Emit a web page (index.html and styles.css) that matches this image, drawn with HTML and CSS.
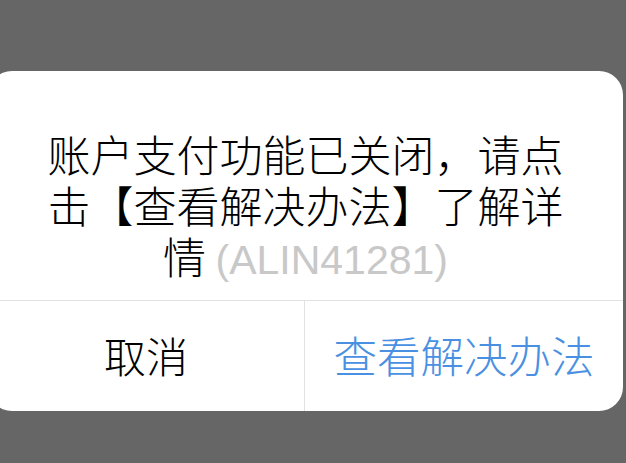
FILE: index.html
```html
<!DOCTYPE html>
<html lang="zh-CN">
<head>
<meta charset="utf-8">
<link rel="stylesheet" href="styles.css">
</head>
<body>
<div class="page">
  <div class="dialog">
    <div class="message">账户支付功能已关闭，请点击【查看解决办法】了解详情 <span class="code">(ALIN41281)</span></div>
    <div class="actions">
      <div class="btn cancel">取消</div>
      <div class="btn confirm">查看解决办法</div>
    </div>
  </div>
</div>
</body>
</html>
```
FILE: styles.css
```css
html, body {
  margin: 0;
  padding: 0;
  background: #666666;
  width: 626px;
  height: 463px;
  overflow: hidden;
}
.page {
  padding-top: 71px;
  margin-left: -12px;
  width: 635px;
}
.dialog {
  background: #ffffff;
  border-radius: 24px;
  height: 340px;
  display: flex;
  flex-direction: column;
  font-family: "Noto Sans CJK SC", "Noto Sans", sans-serif;
  font-weight: 300;
}
.message {
  height: 230px;
  box-sizing: border-box;
  padding: 57px 48px 0;
  font-size: 43px;
  line-height: 51px;
  color: #000;
  text-align: center;
  border-bottom: 1.5px solid #e2e2e2;
}
.code {
  color: #c8c8c8;
  font-family: "Liberation Sans", "Noto Sans", sans-serif;
  font-weight: 400;
  font-size: 41px;
}
.actions {
  flex: 1;
  display: flex;
}
.btn {
  display: flex;
  align-items: center;
  justify-content: center;
  font-size: 42px;
  padding-bottom: 4px;
}
.cancel {
  width: 316px;
  color: #000;
  border-right: 1.5px solid #e2e2e2;
}
.confirm {
  flex: 1;
  color: #4a90e2;
  font-size: 43.5px;
}
```
